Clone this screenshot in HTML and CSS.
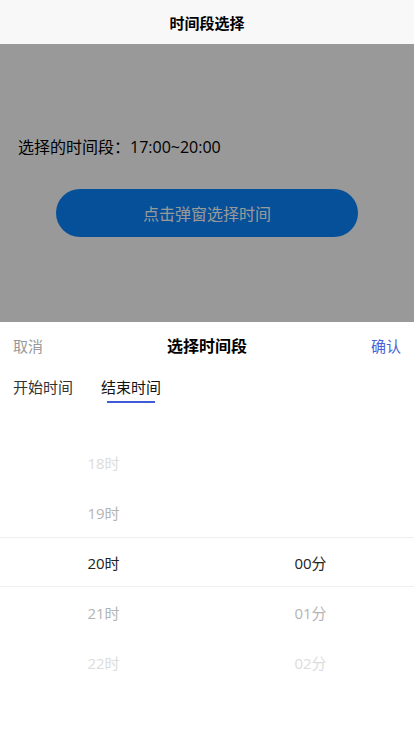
FILE: index.html
```html
<!DOCTYPE html>
<html lang="zh-CN">
<head>
  <meta charset="UTF-8">
  <meta name="viewport" content="width=device-width, initial-scale=1.0">
  <title>时间段选择</title>
  <link rel="stylesheet" href="styles.css">
</head>
<body>
  <header class="nav-bar"><h3>时间段选择</h3></header>
  <div class="page">
    <p class="result">选择的时间段：17:00~20:00</p>
    <div class="button">
      <button>点击弹窗选择时间</button>
    </div>
  </div>

  <div class="mask"></div>

  <div class="popup">
    <div class="popup-head">
      <span class="cancel">取消</span>
      <span class="popup-title">选择时间段</span>
      <span class="confirm">确认</span>
    </div>
    <div class="tabs">
      <span class="tab">开始时间</span>
      <span class="tab active">结束时间</span>
    </div>
    <div class="picker">
      <div class="picker-band"></div>
      <div class="picker-col">
        <div class="item far">18时</div>
        <div class="item near">19时</div>
        <div class="item current">20时</div>
        <div class="item near">21时</div>
        <div class="item far">22时</div>
      </div>
      <div class="picker-col">
        <div class="item"></div>
        <div class="item"></div>
        <div class="item current">00分</div>
        <div class="item near">01分</div>
        <div class="item far">02分</div>
      </div>
    </div>
  </div>
</body>
</html>
```

FILE: styles.css
```css
* {
  margin: 0;
  padding: 0;
  box-sizing: border-box;
}

body {
  font-family: "Open Sans", "Noto Sans CJK SC", sans-serif;
  background-color: #fff;
  color: #222;
  height: 736px;
  overflow: hidden;
}

.nav-bar {
  height: 44px;
  background-color: #f8f8f8;
  display: flex;
  justify-content: center;
  align-items: center;
}

.nav-bar h3 {
  font-size: 15px;
  font-weight: bold;
  color: #000;
}

.page {
  padding: 88px 18px 0;
}

.result {
  font-size: 16px;
  line-height: 30px;
  color: #000;
}

.button {
  padding: 27px 38px 0;
}

.button button {
  width: 100%;
  height: 48px;
  border: none;
  border-radius: 24px;
  background-color: #0a84ff;
  color: #fff;
  font-family: inherit;
  font-size: 16px;
}

.mask {
  position: fixed;
  top: 44px;
  left: 0;
  right: 0;
  bottom: 0;
  background-color: rgba(0, 0, 0, 0.4);
}

.popup {
  position: fixed;
  left: 0;
  right: 0;
  bottom: 0;
  height: 414px;
  background-color: #fff;
}

.popup-head {
  height: 46px;
  padding: 0 13px;
  display: flex;
  justify-content: space-between;
  align-items: center;
  font-size: 15px;
}

.cancel {
  color: #999;
}

.popup-title {
  font-size: 16px;
  font-weight: bold;
  color: #000;
}

.confirm {
  color: #4b5fd6;
}

.tabs {
  height: 36px;
  padding: 0 13px;
  display: flex;
  gap: 28px;
  align-items: center;
  font-size: 15px;
}

.tab {
  position: relative;
  color: #333;
}

.tab.active {
  color: #111;
}

.tab.active::after {
  content: "";
  position: absolute;
  left: 6px;
  right: 6px;
  bottom: -6px;
  height: 2px;
  background-color: #3f5bd8;
}

.picker {
  position: relative;
  margin-top: 9px;
  height: 300px;
  padding-top: 25px;
  display: flex;
}

.picker-band {
  position: absolute;
  left: 0;
  right: 0;
  top: 124px;
  height: 50px;
  border-top: 1px solid #efefef;
  border-bottom: 1px solid #efefef;
}

.picker-col {
  flex: 1;
}

.item {
  height: 50px;
  line-height: 50px;
  text-align: center;
  font-size: 15px;
  color: #222;
}

.item.near {
  color: #b4b4b4;
}

.item.far {
  color: #dcdcdc;
}
```
